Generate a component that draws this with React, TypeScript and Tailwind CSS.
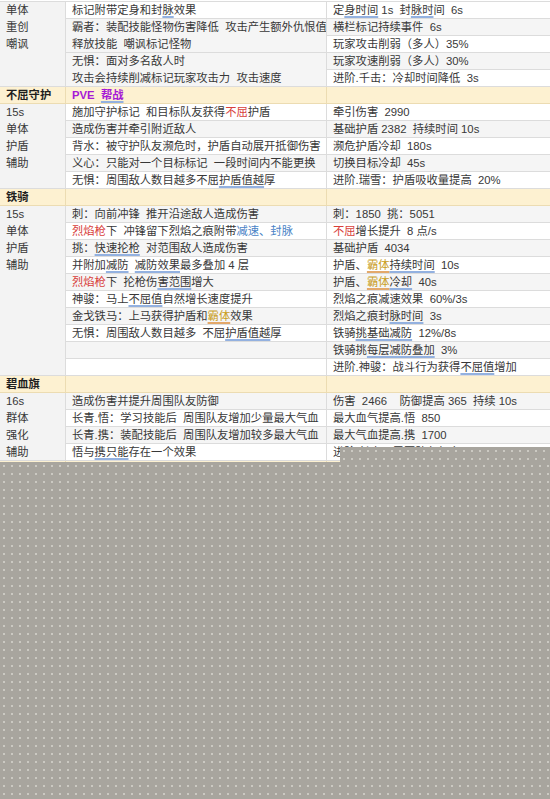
import React from 'react';

const font = { fontFamily: '"Liberation Sans", "Noto Sans CJK SC", sans-serif' };

const R = ({ children }: { children: React.ReactNode }) => <span className="text-[#d8403a]">{children}</span>;
const B = ({ children }: { children: React.ReactNode }) => <span className="text-[#4a83c6]">{children}</span>;
const G = ({ children }: { children: React.ReactNode }) => (
  <span className="text-[#c99d1c] underline decoration-[#e3a86a] decoration-2 underline-offset-2">{children}</span>
);
const U = ({ children }: { children: React.ReactNode }) => (
  <span className="underline decoration-[#93b1e0] decoration-2 underline-offset-2">{children}</span>
);

const spans: Record<number, string> = {
  1: 'row-span-1',
  2: 'row-span-2',
  4: 'row-span-4',
  5: 'row-span-5',
  10: 'row-span-10',
};

function Label({ span, lines }: { span: number; lines: string[] }) {
  return (
    <div className={`col-start-1 ${spans[span]} bg-[#f3f3f3] border-r border-b border-[#dcdcdc] pl-[6px] leading-[17px]`}>
      {lines.map((l) => (
        <div key={l}>{l}</div>
      ))}
    </div>
  );
}

function Mid({ g, span = 1, children }: { g?: boolean; span?: number; children?: React.ReactNode }) {
  return (
    <div
      className={`col-start-2 ${spans[span]} ${g ? 'bg-[#f5f5f5]' : 'bg-white'} border-r border-b border-[#dcdcdc] pl-[6px] leading-[17px] whitespace-nowrap overflow-hidden`}
    >
      {children}
    </div>
  );
}

function Right({ g, children }: { g?: boolean; children?: React.ReactNode }) {
  return (
    <div
      className={`col-start-3 ${g ? 'bg-[#f5f5f5]' : 'bg-white'} border-b border-[#dcdcdc] pl-[6px] leading-[17px] whitespace-nowrap overflow-hidden`}
    >
      {children}
    </div>
  );
}

function Header({ title, mid }: { title?: string; mid?: React.ReactNode }) {
  return (
    <>
      <div className="col-start-1 bg-[#fdf1d1] border-r border-b border-[#ecdcb2] pl-[6px] leading-[17px] font-bold text-[#1e1e1e]">
        {title}
      </div>
      <div className="col-start-2 bg-[#fdf1d1] border-r border-b border-[#ecdcb2] pl-[6px] leading-[17px] font-bold">
        {mid}
      </div>
      <div className="col-start-3 bg-[#fdf1d1] border-b border-[#ecdcb2]" />
    </>
  );
}

export default function App() {
  return (
    <div className="relative w-[550px] h-[799px] overflow-hidden bg-white text-[11.3px] text-[#383838]" style={font}>
      <div className="pt-[1px]">
        <div className="grid grid-cols-[66px_261px_223px] auto-rows-[17px] border-t border-[#dcdcdc]">
          {/* 上一段 */}
          <Label span={5} lines={['单体', '重创', '嘲讽']} />
          <Mid>标记附带定身和封<U>脉</U>效果</Mid>
          <Right>定<U>身时间</U> 1s&nbsp; 封<U>脉时</U>间&nbsp; 6s</Right>
          <Mid g span={2}>
            <div>霸者：装配技能怪物伤害降低&nbsp; 攻击产生额外仇恨值</div>
            <div>释放技能&nbsp; 嘲讽标记怪物</div>
          </Mid>
          <Right g>横栏标记持续事件&nbsp; 6s</Right>
          <Right>玩家攻击削弱（多人）35%</Right>
          <Mid g span={2}>
            <div>无惧：面对多名敌人时</div>
            <div>攻击会持续削减标记玩家攻击力&nbsp; 攻击速度</div>
          </Mid>
          <Right g>玩家攻速削弱（多人）30%</Right>
          <Right>进阶.千击：冷却时间降低&nbsp; 3s</Right>

          {/* 不屈守护 */}
          <Header
            title="不屈守护"
            mid={
              <span className="text-[#a51ad6]">
                PVE&nbsp; <U>帮战</U>
              </span>
            }
          />
          <Label span={5} lines={['15s', '单体', '护盾', '辅助']} />
          <Mid>施加守护标记&nbsp; 和目标队友获得<R>不屈</R>护盾</Mid>
          <Right>牵引伤害&nbsp; 2990</Right>
          <Mid g>造成伤害并牵引附近敌人</Mid>
          <Right g>基础护盾 2382&nbsp; 持续时间 10s</Right>
          <Mid>背水：被守护队友濒危时，护盾自动展开抵御伤害</Mid>
          <Right>濒危护盾冷却&nbsp; 180s</Right>
          <Mid g>义心：只能对一个目标标记&nbsp; 一段时间内不能更换</Mid>
          <Right g>切换目标冷却&nbsp; 45s</Right>
          <Mid>无惧：周围敌人数目越多不屈<U>护盾值越</U>厚</Mid>
          <Right>进阶.瑞雪：护盾吸收量提高&nbsp; 20%</Right>

          {/* 铁骑 */}
          <Header title="铁骑" />
          <Label span={10} lines={['15s', '单体', '护盾', '辅助']} />
          <Mid g>刺：向前冲锋&nbsp; 推开沿途敌人造成伤害</Mid>
          <Right g>刺：1850&nbsp; 挑：5051</Right>
          <Mid>
            <R>烈焰枪</R>下&nbsp; 冲锋留下烈焰之痕附带<B>减速、封脉</B>
          </Mid>
          <Right>
            <R>不屈</R>增长提升&nbsp; 8 点/s
          </Right>
          <Mid g>
            挑：<U>快速抡枪</U>&nbsp; 对范围敌人造成伤害
          </Mid>
          <Right g>基础护盾&nbsp; 4034</Right>
          <Mid>
            并附加<U>减防</U>&nbsp; <U>减防效果</U>最多叠加 4 层
          </Mid>
          <Right>
            护盾、<G>霸体</G>
            <U>持续时间</U>&nbsp; 10s
          </Right>
          <Mid g>
            <R>烈焰枪</R>下&nbsp; 抡枪伤<U>害范围</U>增大
          </Mid>
          <Right g>
            护盾、<G>霸体</G>
            <U>冷却</U>&nbsp; 40s
          </Right>
          <Mid>
            神骏：马上<U>不屈值</U>自然增长速度提升
          </Mid>
          <Right>烈焰之痕减速效果&nbsp; 60%/3s</Right>
          <Mid g>
            金戈铁马：上马获得护盾和<G>霸体</G>效果
          </Mid>
          <Right g>
            烈焰之痕封<U>脉时间</U>&nbsp; 3s
          </Right>
          <Mid>
            无惧：周围敌人数目越多&nbsp; 不屈<U>护盾值越</U>厚
          </Mid>
          <Right>
            铁骑<U>挑基础减防</U>&nbsp; 12%/8s
          </Right>
          <Mid g />
          <Right g>
            铁骑挑<U>每层减防叠加</U>&nbsp; 3%
          </Right>
          <Mid />
          <Right>
            进阶.神骏：战斗行为获得<U>不屈值</U>增加
          </Right>

          {/* 碧血旗 */}
          <Header title="碧血旗" />
          <Label span={4} lines={['16s', '群体', '强化', '辅助']} />
          <Mid g>造成伤害并提升周围队友防御</Mid>
          <Right g>伤害&nbsp; 2466&nbsp;&nbsp;&nbsp; 防御提高 365&nbsp; 持续 10s</Right>
          <Mid>长青.悟：学习技能后&nbsp; 周围队友增加少量最大气血</Mid>
          <Right>最大血气提高.悟&nbsp; 850</Right>
          <Mid g>长青.携：装配技能后&nbsp; 周围队友增加较多最大气血</Mid>
          <Right g>最大气血提高.携&nbsp; 1700</Right>
          <Mid>
            悟与<U>携只能</U>存在一个效果
          </Mid>
          <Right>进阶.长青：周围队友气血</Right>

          <Header title="" />
        </div>
      </div>

      {/* 遮罩 */}
      <div className="absolute left-[340px] right-0 top-[447px] h-[16px] bg-[#a8a59e] bg-[radial-gradient(circle,#cbc9c2_0.8px,transparent_1.1px)] bg-[length:8px_8px]" />
      <div className="absolute left-0 right-0 top-[462px] bottom-0 bg-[#a8a59e] bg-[radial-gradient(circle,#cbc9c2_0.8px,transparent_1.1px)] bg-[length:8px_8px]" />
    </div>
  );
}
